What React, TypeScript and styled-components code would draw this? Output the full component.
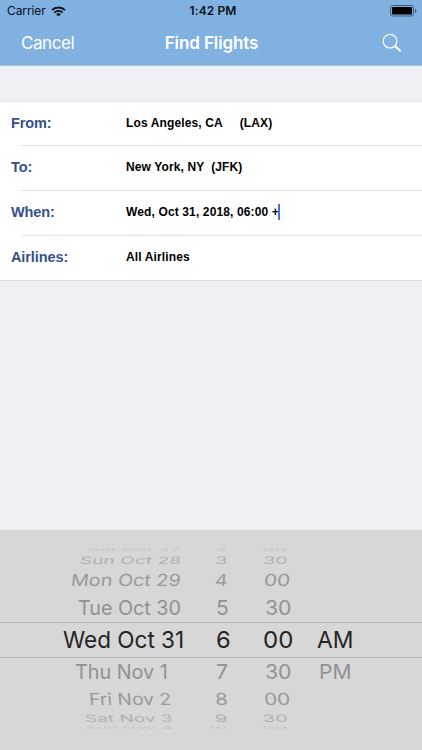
import React, { useLayoutEffect, useRef, useState } from "react";
import styled, { createGlobalStyle } from "styled-components";

const GlobalStyle = createGlobalStyle`
  * { box-sizing: border-box; }
  body { margin: 0; background: #efeef4; }
`;

const Screen = styled.div`
  width: 422px;
  height: 750px;
  display: flex;
  flex-direction: column;
  overflow: hidden;
  background: #efeef4;
  font-family: Inter, "Liberation Sans", sans-serif;
`;

const Header = styled.header`
  height: 66px;
  background: #80b1e1;
  border-bottom: 1px solid #a9bfd9;
`;

const StatusBar = styled.div`
  height: 22px;
  padding: 0 5px 0 7px;
  display: grid;
  grid-template-columns: 1fr auto 1fr;
  align-items: center;
  font-size: 12px;
  line-height: 22px;
  color: #0a1018;
`;

const Carrier = styled.div`
  display: flex;
  align-items: center;
  gap: 5px;
  letter-spacing: -0.1px;
`;

const Clock = styled.div`
  font-weight: 600;
  letter-spacing: 0.1px;
  padding-left: 2px;
`;

const BatterySlot = styled.div`
  display: flex;
  justify-content: flex-end;
`;

const NavBar = styled.nav`
  height: 43px;
  padding: 0 20px 0 21px;
  display: grid;
  grid-template-columns: 1fr auto 1fr;
  align-items: center;
  color: #fff;
  font-size: 17px;
  line-height: 43px;
`;

const CancelButton = styled.button`
  justify-self: start;
  padding: 0;
  border: 0;
  background: none;
  color: inherit;
  font: inherit;
  letter-spacing: -0.45px;
`;

const Title = styled.h1`
  margin: 0;
  font-size: 17px;
  line-height: 43px;
  font-weight: 600;
  letter-spacing: -0.1px;
`;

const SearchButton = styled.button`
  justify-self: end;
  display: flex;
  padding: 0;
  margin-bottom: 2px;
  border: 0;
  background: none;
`;

const Form = styled.section`
  margin-top: 35px;
  height: 180px;
  background: #fff;
  border-top: 1px solid #e6e6ea;
  border-bottom: 1px solid #dcdce1;
  font-family: "Liberation Sans", Arial, sans-serif;
  font-weight: 700;
`;

const Field = styled.div`
  height: 45px;
  display: grid;
  grid-template-columns: 126px 1fr;
  align-items: center;
  background: linear-gradient(#e4e4e7, #e4e4e7) 21px 0 / 100% 1px no-repeat;
  &:first-child { height: 43px; background: none; }
`;

const Label = styled.label`
  padding: 0 0 1px 11px;
  color: #35508c;
  font-size: 14.5px;
  letter-spacing: -0.1px;
`;

const Value = styled.div`
  display: flex;
  align-items: center;
  padding-bottom: 1px;
  white-space: pre;
  color: #000;
  font-size: 12px;
  letter-spacing: 0.13px;
`;

const Caret = styled.span`
  width: 2px;
  height: 16px;
  margin-left: -0.5px;
  background: #4a6fe0;
`;

const Picker = styled.section`
  margin-top: auto;
  height: 220px;
  padding-top: 15px;
  background: #d7d7d7;
`;

const WheelRow = styled.div<{ $height: number; $color: string; $selected: boolean }>`
  height: ${(p) => p.$height}px;
  display: grid;
  grid-template-columns: 200px 50px 60px 1fr;
  align-items: center;
  color: ${(p) => p.$color};
  border: 0 solid #bababa;
  border-width: ${(p) => (p.$selected ? "1px 0" : "0")};
`;

const WheelCell = styled.div`
  height: 0;
  display: flex;
  align-items: center;
`;

const WheelText = styled.span<{ $shift: number; $size: number }>`
  flex: none;
  margin-left: ${(p) => p.$shift}px;
  font-size: ${(p) => p.$size}px;
  line-height: 28px;
  white-space: nowrap;
  transform-origin: 0 50%;
`;

type Span = [text: string, start: number, end: number];

interface Row {
  height: number;
  color: string;
  squash: number;
  skew: number;
  cells: Span[];
}

const COLUMN_START = [0, 200, 250, 310];

const ROWS: Row[] = [
  { height: 9, color: "#c4c4c4", squash: 0.18, skew: -8, cells: [["Sat Oct 27", 88, 180.5], ["2", 215.5, 227], ["00", 261.5, 286.5]] },
  { height: 12, color: "#b0b0b0", squash: 0.44, skew: -8, cells: [["Sun Oct 28", 79.5, 180.5], ["3", 215, 227.2], ["30", 263.2, 288]] },
  { height: 27, color: "#999999", squash: 0.71, skew: -6, cells: [["Mon Oct 29", 70.5, 180.3], ["4", 215, 227.5], ["00", 264.2, 290.5]] },
  { height: 29, color: "#919191", squash: 0.85, skew: 0, cells: [["Tue Oct 30", 77.5, 180.5], ["5", 215.7, 228.5], ["30", 265, 291.5]] },
  { height: 36, color: "#252525", squash: 1, skew: 0, cells: [["Wed Oct 31", 62.5, 183.7], ["6", 216.3, 231], ["00", 263.3, 293.6], ["AM", 317.3, 353.8]] },
  { height: 28, color: "#919191", squash: 0.85, skew: 0, cells: [["Thu Nov 1", 74.5, 167.3], ["7", 216, 228], ["30", 265, 291.5], ["PM", 319, 351.5]] },
  { height: 25, color: "#999999", squash: 0.71, skew: 4, cells: [["Fri Nov 2", 88.5, 170.7], ["8", 215, 227.7], ["00", 264.2, 290.5]] },
  { height: 14, color: "#b0b0b0", squash: 0.44, skew: 8, cells: [["Sat Nov 3", 84.5, 172], ["9", 215, 227.5], ["30", 263.2, 288]] },
  { height: 6, color: "#c4c4c4", squash: 0.18, skew: 8, cells: [["Sun Nov 4", 84.5, 172.5], ["10", 208, 227], ["00", 261.5, 286.5]] },
];

function DrumText({ text, shift, width, squash, skew }: { text: string; shift: number; width: number; squash: number; skew: number }) {
  const ref = useRef<HTMLSpanElement>(null);
  const [stretch, setStretch] = useState(1);
  useLayoutEffect(() => {
    if (ref.current) setStretch(width / parseFloat(getComputedStyle(ref.current).width || "1"));
  }, [width]);
  return (
    <WheelText ref={ref} $shift={shift} $size={23.5} style={{ transform: `skewX(${skew}deg) scale(${stretch}, ${squash})` }}>
      {text}
    </WheelText>
  );
}

function WifiIcon() {
  return (
    <svg width="15" height="11" viewBox="0 0 15 11" fill="none" stroke="#0a1018">
      <path d="M1 4.1a9.2 9.2 0 0 1 13 0" strokeWidth="2" />
      <path d="M3.4 6.6a5.8 5.8 0 0 1 8.2 0" strokeWidth="1.8" />
      <path d="M7.5 10.5 5.2 8.2a3.3 3.3 0 0 1 4.6 0z" fill="#0a1018" stroke="none" />
    </svg>
  );
}

function BatteryIcon() {
  return (
    <svg width="27" height="12" viewBox="0 0 27 12">
      <rect x="0.5" y="0.5" width="23" height="10.5" rx="2.3" fill="none" stroke="#40586f" />
      <rect x="2" y="2" width="20" height="7.5" rx="0.8" fill="#000" />
      <path d="M25 4v4c1.8-.5 1.8-3.5 0-4z" fill="#40586f" />
    </svg>
  );
}

function SearchIcon() {
  return (
    <svg width="20" height="20" viewBox="0 0 20 20" fill="none" stroke="#fff">
      <circle cx="8" cy="8.2" r="6.8" strokeWidth="1.2" />
      <path d="m12.8 13 1.4 1.3" strokeWidth="1.2" />
      <path d="m14 14 4.1 3.7" strokeWidth="2" strokeLinecap="round" />
    </svg>
  );
}

export default function App() {
  return (
    <Screen>
      <GlobalStyle />
      <Header>
        <StatusBar>
          <Carrier>Carrier <WifiIcon /></Carrier>
          <Clock>1:42 PM</Clock>
          <BatterySlot><BatteryIcon /></BatterySlot>
        </StatusBar>
        <NavBar>
          <CancelButton>Cancel</CancelButton>
          <Title>Find Flights</Title>
          <SearchButton aria-label="Search"><SearchIcon /></SearchButton>
        </NavBar>
      </Header>
      <Form>
        <Field><Label>From:</Label><Value>{"Los Angeles, CA     (LAX)"}</Value></Field>
        <Field><Label>To:</Label><Value>{"New York, NY  (JFK)"}</Value></Field>
        <Field><Label>When:</Label><Value>Wed, Oct 31, 2018, 06:00 +<Caret /></Value></Field>
        <Field><Label>Airlines:</Label><Value>All Airlines</Value></Field>
      </Form>
      <Picker>
        {ROWS.map((row) => (
          <WheelRow key={row.cells[0][0]} $height={row.height} $color={row.color} $selected={row.squash === 1}>
            {row.cells.map(([text, start, end], i) => (
              <WheelCell key={i}>
                <DrumText text={text} shift={start - COLUMN_START[i]} width={end - start} squash={row.squash} skew={row.skew} />
              </WheelCell>
            ))}
          </WheelRow>
        ))}
      </Picker>
    </Screen>
  );
}
